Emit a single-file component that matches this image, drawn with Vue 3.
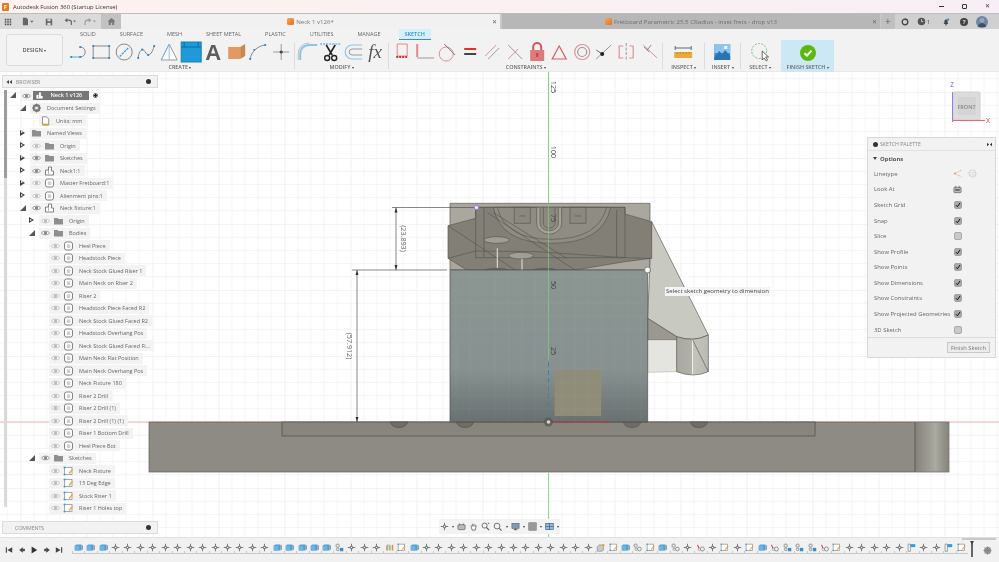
<template>
  <div class="app">
    <svg class="defs" width="0" height="0" aria-hidden="true">
      <defs>
        <symbol id="i-eye" viewBox="0 0 10 10"><path d="M.8 5C2.5 2.6 7.5 2.6 9.2 5 7.5 7.4 2.5 7.4.8 5Z" fill="#fff" stroke="currentColor" stroke-width=".8" /><circle cx="5" cy="5" r="1.7" fill="currentColor" /></symbol>
        <symbol id="i-folder" viewBox="0 0 10 10"><path d="M.5 2H4l1 1h4.5v5.5H.5Z" fill="#8f8f8f" /></symbol>
        <symbol id="i-comp" viewBox="0 0 10 10"><path d="M1 4h3V1h3v4h2v4H1Z" fill="#fff" stroke="#666" stroke-width=".8" stroke-linejoin="round" /><path d="M4 4v4" stroke="#888" stroke-width=".6" /></symbol>
        <symbol id="i-body" viewBox="0 0 10 10"><rect x="1" y="1" width="8" height="8" rx="2" fill="#fff" stroke="#666" stroke-width=".8" /><rect x="3.4" y="3.4" width="3.4" height="3.6" fill="#cfcfcf" /></symbol>
        <symbol id="i-sketch" viewBox="0 0 10 10"><rect x="1" y="1.5" width="7.5" height="7" fill="#fff" stroke="#7a8a96" stroke-width=".7" /><circle cx="1" cy="1.5" r="1" fill="#3c9ad6" /><circle cx="1" cy="8.5" r="1" fill="#3c9ad6" /><path d="M5.5 7.5 9 3.5" stroke="#f0a030" stroke-width="1.2" /></symbol>
        <symbol id="i-gear" viewBox="0 0 10 10"><circle cx="5" cy="5" r="3" fill="none" stroke="#777" stroke-width="1.8" /><path d="M5 .5v9M.5 5h9M1.8 1.8l6.4 6.4M8.2 1.8 1.8 8.2" stroke="#777" stroke-width="1" /><circle cx="5" cy="5" r="1.3" fill="#f2f2f2" /></symbol>
        <symbol id="i-doc" viewBox="0 0 10 10"><path d="M2 .8h4l2.2 2.2v6H2Z" fill="#fff" stroke="#666" stroke-width=".7" /><path d="M1.6 7.6h7v1.7h-7Z" fill="#e0a030" /></symbol>

        <symbol id="t-line" viewBox="0 0 22 22"><path d="M12 6a5 5 0 0 1 0 10" fill="none" stroke="#888" stroke-width="1" /><path d="M3 16h9" stroke="#5aa6da" stroke-width="1" /><circle cx="3" cy="16" r="1.1" fill="#1f86cc" /><circle cx="12" cy="16" r="1.1" fill="#1f86cc" /><circle cx="12" cy="6" r="1.1" fill="#1f86cc" /></symbol>
        <symbol id="t-rect" viewBox="0 0 22 22"><rect x="3" y="5" width="16" height="12" fill="none" stroke="#888" /><path d="M3 5h.1M19 5h.1M3 17h.1M19 17h.1" stroke="#1f86cc" stroke-width="2" stroke-linecap="round" /></symbol>
        <symbol id="t-circle" viewBox="0 0 22 22"><circle cx="11" cy="11" r="8" fill="none" stroke="#888" /><path d="M6.5 15.5 15.5 6.5" stroke="#3b9bd8" stroke-width="1.2" stroke-dasharray="2.4 .8" /></symbol>
        <symbol id="t-spline" viewBox="0 0 22 22"><path d="M3 17C4 8 8 7 10 11s6 5 9-6" fill="none" stroke="#888" /><g fill="#1f86cc"><circle cx="3" cy="17" r="1.1" /><circle cx="7" cy="8.5" r="1.1" /><circle cx="13" cy="14" r="1.1" /><circle cx="19" cy="5" r="1.1" /></g></symbol>
        <symbol id="t-tri" viewBox="0 0 22 22"><path d="M11 3 3 19h16Z" fill="#fff" stroke="#999" /><path d="M11 3v16M3 19 11 3" stroke="#7ab8e2" stroke-width=".9" fill="none" /></symbol>
        <symbol id="t-project" viewBox="0 0 22 22"><rect width="20" height="20" x="1" y="1" fill="#1f9ad6" stroke="#1480bc" /><path d="M1 6h20M4 1v5M18 1v5" stroke="#0c6fa6" /></symbol>
        <symbol id="t-text" viewBox="0 0 22 22"><text x="11" y="19" text-anchor="middle" font-family="Liberation Sans, sans-serif" font-weight="700" font-size="22" fill="#5c5c5c">A</text></symbol>
        <symbol id="t-box" viewBox="0 0 22 22"><path d="M3 6h12v12H3Z" fill="#e39a62" /><path d="M15 6l5-3v12l-5 3Z" fill="#c98850" /></symbol>
        <symbol id="t-arc" viewBox="0 0 22 22"><path d="M3 18C4 11 10 5 18 4" fill="none" stroke="#888" /><g fill="#1f86cc"><circle cx="3" cy="18" r="1.1" /><circle cx="18" cy="4" r="1.1" /><circle cx="7" cy="9" r="1" /></g></symbol>
        <symbol id="t-point" viewBox="0 0 22 22"><path d="M11 3v16M3 11h16" stroke="#999" /><circle cx="11" cy="11" r="1.6" fill="#444" /></symbol>
        <symbol id="t-fillet" viewBox="0 0 22 22"><path d="M3 19v-6Q3 5 12 4h8" fill="none" stroke="#8cc4ea" stroke-width="2" /><path d="M1 19v-6Q1 3 12 2" fill="none" stroke="#aaa" stroke-width=".7" /></symbol>
        <symbol id="t-trim" viewBox="0 0 22 22"><path d="M1 3h20" stroke="#3b9bd8" stroke-dasharray="2 1" /><path d="M7 4l6 10M16 4l-6 10" stroke="#222" stroke-width="1.6" /><circle cx="8" cy="17" r="2.5" fill="none" stroke="#222" stroke-width="1.4" /><circle cx="15" cy="17" r="2.5" fill="none" stroke="#222" stroke-width="1.4" /></symbol>
        <symbol id="t-offset" viewBox="0 0 22 22"><path d="M20 4H10a7 7 0 0 0 0 14h10" fill="none" stroke="#8cc4ea" stroke-width="1.2" /><path d="M20 8H10a3 3 0 0 0 0 6h10" fill="none" stroke="#999" stroke-width="1" /></symbol>
        <symbol id="t-fx" viewBox="0 0 22 22"><text x="11" y="17" text-anchor="middle" font-family="Liberation Serif, serif" font-style="italic" font-size="19" fill="#555">fx</text></symbol>
        <symbol id="t-dim" viewBox="0 0 22 22"><path d="M6 3h10v12H6Z" fill="none" stroke="#e08a8a" /><path d="M5 16h12" stroke="#c33" stroke-width="2" stroke-dasharray="2 1" /></symbol>
        <symbol id="t-coll" viewBox="0 0 22 22"><path d="M3 3v13" stroke="#e08a8a" stroke-width="2" /><path d="M3 17h17" stroke="#999" /></symbol>
        <symbol id="t-tan" viewBox="0 0 22 22"><circle cx="10" cy="13" r="7" fill="none" stroke="#e09090" /><path d="M8 3l11 11" stroke="#777" /></symbol>
        <symbol id="t-equal" viewBox="0 0 22 22"><path d="M5 8h12" stroke="#d33" stroke-width="2.2" /><path d="M5 13h12" stroke="#444" stroke-width="2.2" /></symbol>
        <symbol id="t-para" viewBox="0 0 22 22"><path d="M4 15 15 4" stroke="#e09090" /><path d="M7 18 18 7" stroke="#999" /></symbol>
        <symbol id="t-perp" viewBox="0 0 22 22"><path d="M5 4 19 18" stroke="#999" /><path d="M5 18 15 8" stroke="#e09090" /></symbol>
        <symbol id="t-lock" viewBox="0 0 22 22"><path d="M7 10V6a4 4 0 0 1 8 0v4" fill="none" stroke="#d05a5a" stroke-width="2" /><rect x="4" y="9" width="14" height="11" fill="#e07a7a" /><rect x="10" y="12" width="2" height="4" fill="#b44" /></symbol>
        <symbol id="t-triangle" viewBox="0 0 22 22"><path d="M11 5 4 18h14Z" fill="none" stroke="#d86060" stroke-width="1.2" /></symbol>
        <symbol id="t-conc" viewBox="0 0 22 22"><circle cx="11" cy="11" r="7.5" fill="none" stroke="#e09090" stroke-width="1.2" /><circle cx="11" cy="11" r="4.5" fill="none" stroke="#999" stroke-width="1.2" /></symbol>
        <symbol id="t-mid" viewBox="0 0 22 22"><path d="M3 18 18 4" stroke="#999" /><path d="M3 9l6 4" stroke="#666" /><circle cx="9" cy="13" r="2" fill="#222" /></symbol>
        <symbol id="t-sym" viewBox="0 0 22 22"><path d="M11 2v18" stroke="#999" stroke-dasharray="3 1.5" /><path d="M8 5H4v12h4M14 5h4v12h-4" fill="none" stroke="#e09090" stroke-width="1.2" /></symbol>
        <symbol id="t-fix" viewBox="0 0 22 22"><path d="M5 4 19 17" stroke="#e09090" /><path d="M13 4 9 9M6 6l5 5" stroke="#888" /></symbol>
        <symbol id="t-ruler" viewBox="0 0 22 22"><path d="M3 7h16M3 5v4M19 5v4" stroke="#666" fill="none" /><rect x="2" y="11" width="18" height="6" fill="#eba93a" /><path d="M5 11v2M8 11v2M11 11v2M14 11v2M17 11v2" stroke="#a87418" stroke-width=".7" /></symbol>
        <symbol id="t-image" viewBox="0 0 22 22"><rect x="3" y="3" width="16" height="16" fill="#3d8fd1" /><rect x="3" y="3" width="16" height="9" fill="#8cc6ee" /><path d="M3 17l5-7 3 3 3-4 5 6v4H3Z" fill="#2b74b3" /><rect x="13" y="5" width="3" height="3" fill="#fff" /></symbol>
        <symbol id="t-select" viewBox="0 0 22 22"><circle cx="10" cy="10" r="7.5" fill="none" stroke="#6fbf86" stroke-dasharray="2 1.4" /><path d="M13 10v9l2-2 2 3 1.4-1-2-3h3Z" fill="#fff" stroke="#444" stroke-width=".8" /></symbol>

        <symbol id="n-plus" viewBox="0 0 12 12"><path d="M6 1v10M1 6h10" stroke="#555" /><path d="M4.5 4.5h3v3h-3Z" fill="#f0f0f0" stroke="#444" stroke-width=".8" /></symbol>
        <symbol id="n-box" viewBox="0 0 12 12"><path d="M1 3.5 3 2h7v8H1Z" fill="#4d9fd8" /><path d="M1 3.5h6V10H1Z" fill="#6db4e6" /><path d="M11 3v6" stroke="#555" /></symbol>
        <symbol id="n-joint" viewBox="0 0 12 12"><rect x="1.5" y="1.5" width="4" height="4" rx="1" fill="none" stroke="#777" /><circle cx="3.5" cy="8.5" r="1.7" fill="none" stroke="#777" /><rect x="6.5" y="6.5" width="4.5" height="4.5" fill="#2f8fd4" /></symbol>
        <symbol id="n-jointo" viewBox="0 0 12 12"><rect x="1.5" y="1.5" width="4" height="4" rx="1" fill="none" stroke="#777" /><circle cx="8.5" cy="8" r="2.5" fill="none" stroke="#777" /><circle cx="4" cy="8.5" r="1.5" fill="none" stroke="#999" /></symbol>
        <symbol id="n-red" viewBox="0 0 12 12"><path d="M2 2.5 4 7" stroke="#d33" stroke-width="1.4" /><circle cx="8.5" cy="8" r="2.7" fill="none" stroke="#777" /><circle cx="4.5" cy="8.5" r="1.6" fill="none" stroke="#999" /></symbol>
        <symbol id="n-sketch" viewBox="0 0 12 12"><rect x="1.5" y="1.5" width="8.5" height="8.5" fill="#fff" stroke="#888" stroke-width=".9" /><circle cx="1.5" cy="1.5" r="1" fill="#3c9ad6" /><circle cx="1.5" cy="10" r="1" fill="#3c9ad6" /><path d="M6.5 9 11 4" stroke="#f0a030" stroke-width="1.4" /></symbol>
        <symbol id="n-bars" viewBox="0 0 12 12"><path d="M2 10V4l2-2v8" fill="#e7c07a" stroke="#777" stroke-width=".6" /><path d="M5.5 10V3l2-1v8" fill="#7cc27a" /><path d="M9 10V3l2-1v8" fill="#e08a4a" /></symbol>
        <symbol id="n-comp" viewBox="0 0 12 12"><path d="M1.5 5 4 2.5h6v7L8 11H1.5Z" fill="#c8c8c8" stroke="#888" stroke-width=".8" /><circle cx="9.5" cy="3" r="1.8" fill="#f2a43a" /></symbol>
        <symbol id="n-plate" viewBox="0 0 12 12"><path d="M1.5 1.5h3V11h-3Z" fill="#fff" stroke="#666" stroke-width=".8" /><path d="M4.5 1.5H11v4H4.5Z" fill="#3a9ad9" /></symbol>
        <symbol id="c-on" viewBox="0 0 8 8"><rect x=".5" y=".5" width="7" height="7" rx="1.4" fill="#a9a9a9" stroke="#777" stroke-width=".5" /><path d="M2 4.2 3.4 5.8 6 2" fill="none" stroke="#111" stroke-width="1" /></symbol>
        <symbol id="c-off" viewBox="0 0 8 8"><rect x=".5" y=".5" width="7" height="7" rx="1.4" fill="#c9c9c9" stroke="#777" stroke-width=".5" /></symbol>
      </defs>
    </svg>

    <header class="titlebar">
      <span class="titlebar__logo">F</span>
      <span class="titlebar__text">Autodesk Fusion 360 (Startup License)</span>
      <div class="titlebar__controls">
        <span class="winbtn winbtn--min"></span>
        <span class="winbtn winbtn--max"></span>
        <span class="winbtn winbtn--close">✕</span>
      </div>
    </header>

    <div class="tabbar">
      <div class="quick">
        <svg class="quick__icon" viewBox="0 0 10 10"><path d="M1 1h2v2H1ZM4 1h2v2H4ZM7 1h2v2H7ZM1 4h2v2H1ZM4 4h2v2H4ZM7 4h2v2H7ZM1 7h2v2H1ZM4 7h2v2H4ZM7 7h2v2H7Z" fill="#555" /></svg>
        <svg class="quick__icon quick__icon--file" viewBox="0 0 14 10"><path d="M1 .5h4l2 2v7H1Z" fill="#666" /><path d="M9.5 4h4L11.5 6.5Z" fill="#666" /></svg>
        <svg class="quick__icon quick__icon--save" viewBox="0 0 10 10"><path d="M1 1h7l1 1v7H1Z" fill="#666" /><rect x="3" y="1.5" width="4" height="2.5" fill="#ddd" /><rect x="3" y="6" width="4" height="3" fill="#ddd" /></svg>
        <svg class="quick__icon quick__icon--undo" viewBox="0 0 14 10"><path d="M1 3.5 4 1v5Z" fill="#666" /><path d="M3.5 3.5H6A2.5 2.5 0 0 1 8.5 6v3" fill="none" stroke="#666" stroke-width="1.3" /><path d="M10.5 4h3L12 6Z" fill="#666" /></svg>
        <svg class="quick__icon quick__icon--redo" viewBox="0 0 14 10"><path d="M8.5 3.5 5.5 1v5Z" fill="#999" /><path d="M6 3.5H4A2.5 2.5 0 0 0 1.5 6v3" fill="none" stroke="#999" stroke-width="1.3" /><path d="M10.5 4h3L12 6Z" fill="#999" /></svg>
        <span class="quick__home">
          <svg viewBox="0 0 10 10" width="9" height="9"><path d="M5 1 .5 5H2v4h2.2V6.5h1.6V9H8V5h1.5Z" fill="#777" /></svg>
        </span>
      </div>
      <div class="doctab doctab--active">
        <span class="doctab__cube"></span>
        <span class="doctab__name">Neck 1 v126*</span>
        <span class="doctab__close">✕</span>
      </div>
      <div class="doctab doctab--other">
        <span class="doctab__cube"></span>
        <span class="doctab__name">Fretboard Parametric 25.5 CRadius - inset frets - drop v13</span>
        <span class="doctab__close">✕</span>
      </div>
      <span class="tabbar__plus">+</span>
      <div class="tabbar__right">
        <svg class="status status--job" viewBox="0 0 10 10"><circle cx="5" cy="5" r="3.5" fill="none" stroke="#444" stroke-width="1.6" /><path d="M5 0 7 2 5 3Z" fill="#444" /></svg>
        <span class="status-count">
          <svg viewBox="0 0 10 10" width="9" height="9"><circle cx="5" cy="5" r="4.2" fill="#555" /><path d="M5 2.5V5h2" stroke="#ccc" fill="none" /></svg>
          <span>1</span>
        </span>
        <svg class="status status--bell" viewBox="0 0 10 10"><path d="M5 2C3 2 3 4 3 6L2 7.5h6L7 6C7 4 7 2 5 2Z" fill="#444" /><circle cx="5" cy="8.5" r="1" fill="#444" /><circle cx="7.5" cy="2" r="1.5" fill="#2a8fd8" /></svg>
        <span class="status status--help">?</span>
        <svg class="status status--avatar" viewBox="0 0 12 12"><circle cx="6" cy="6" r="6" fill="#6f86a6" /><circle cx="6" cy="4.5" r="2.4" fill="#98a6b8" /><path d="M1.8 11c.6-3 2.4-4 4.2-4s3.6 1 4.2 4Z" fill="#3f4f66" /></svg>
      </div>
    </div>

    <div class="toolbar">
      <button class="design">DESIGN <i class="caret"></i></button>
      <div class="ribbon">
        <nav class="ribbon__tabs">
          <span v-for="tab in tabs" :key="tab" class="ribbon__tab" :class="{ 'ribbon__tab--active': tab === 'SKETCH' }">{{ tab }}</span>
        </nav>
        <div class="ribbon__groups">
          <section v-for="group in groups" :key="group.label" class="group" :class="`group--${group.kind}`">
            <div class="group__icons">
              <svg v-for="icon in group.icons" :key="icon" class="tool"><use :href="`#t-${icon}`" /></svg>
              <span v-if="group.kind === 'finish'" class="finish-check">
                <svg viewBox="0 0 16 16" width="16" height="16"><circle cx="8" cy="8" r="8" fill="#5cb811" /><path d="M4.5 8.2 7 10.6l4.5-5" fill="none" stroke="#fff" stroke-width="2" /></svg>
              </span>
            </div>
            <span class="group__label">{{ group.label }} <i class="caret"></i></span>
          </section>
        </div>
      </div>
    </div>

    <main class="workspace">
      <svg class="canvas" viewBox="0 72 999 465">
        <defs>
          <pattern id="grid" patternUnits="userSpaceOnUse" x="548.5" y="422" width="66" height="66">
            <path d="M13.2 0v66M26.4 0v66M39.6 0v66M52.8 0v66M0 13.2h66M0 26.4h66M0 39.6h66M0 52.8h66" stroke="#f4f4f4" stroke-width="1" fill="none" />
            <path d="M0 0v66M0 0h66" stroke="#e8e8e8" stroke-width="1.2" fill="none" />
          </pattern>
          <linearGradient id="block" x1="0" y1="0" x2="0" y2="1">
            <stop offset="0" stop-color="#8b9592" />
            <stop offset=".65" stop-color="#87918f" />
            <stop offset="1" stop-color="#687170" />
          </linearGradient>
          <linearGradient id="cyl" x1="0" y1="0" x2="1" y2="0">
            <stop offset="0" stop-color="#84827a" />
            <stop offset=".6" stop-color="#aaaaa1" />
            <stop offset="1" stop-color="#84827a" />
          </linearGradient>
          <linearGradient id="post" x1="0" y1="0" x2="1" y2="0">
            <stop offset="0" stop-color="#a9a89f" />
            <stop offset=".47" stop-color="#b2b1a8" />
            <stop offset=".5" stop-color="#eee" />
            <stop offset=".53" stop-color="#c4c3bb" />
            <stop offset="1" stop-color="#bcbbb3" />
          </linearGradient>
        </defs>
        <rect x="0" y="72" width="999" height="465" fill="#fff" />
        <rect x="0" y="72" width="999" height="465" fill="url(#grid)" />

        <path d="M0 422H999" stroke="#f4b5b5" stroke-width="1" />
        <path d="M548.5 72V537" stroke="#8fdc8f" stroke-width="1" />

        <!-- base plate -->
        <rect x="149" y="422" width="800" height="50" fill="#8d8b83" stroke="#5f5d56" stroke-width=".7" />
        <rect x="915" y="422.5" width="34" height="49" fill="url(#cyl)" />
        <path d="M915 422V472" stroke="#4e4c46" stroke-width=".7" />
        <rect x="282" y="422" width="533" height="14" fill="#88867c" stroke="#4e4c46" stroke-width=".7" />
        <path v-for="x in holes" :key="x" :d="`M${x - 8.5} 422a8.5 5.5 0 0 0 17 0Z`" fill="#6f6d66" stroke="#4e4c46" stroke-width=".6" />
        <path d="M548.5 472V537" stroke="#8fdc8f" stroke-width="1" />

        <!-- fixture, drawn in 3x coordinates -->
        <g transform="translate(380 190) scale(.33333)" stroke="#5a5850" stroke-width="2" stroke-linejoin="round">
          <rect x="210" y="40" width="600" height="200" fill="#a9a79e" />
          <path d="M803 385 815 95 985 435 Q940 458 890 440Z" fill="#c8c9c1" />
          <path d="M803 385 890 440V450H803Z" fill="#9a988f" />
          <path d="M803 450H890V545L803 547Z" fill="#e5e5e0" stroke="#a8a8a2" stroke-width="1.5" />
          <path d="M890 440Q940 458 985 435V545Q940 565 890 545Z" fill="url(#post)" />
          <path d="M938 450 985 545" fill="none" />
          <path d="M204 107 287 85V52H735V72L815 95V205L735 215 585 240H260L204 205Z" fill="#817f76" />
          <path d="M340 52Q360 160 515 160 670 160 692 52Z" fill="#8e8c83" />
          <path d="M352 52Q375 148 515 148 655 148 680 52" fill="none" />
          <rect x="403" y="52" width="48" height="48" fill="#8a887f" />
          <rect x="570" y="52" width="48" height="48" fill="#8a887f" />
          <path d="M418 78h18M585 78h18" />
          <path d="M470 52V100a37 32 0 0 0 75 0V52" fill="#a3a198" />
          <path d="M480 52V100a27 22 0 0 0 55 0V52" fill="#8e8c83" />
          <path d="M490 52V100a17 14 0 0 0 35 0V52" fill="#8a887f" />
          <rect x="287" y="52" width="448" height="151" fill="none" />
          <path d="M312 52V203M710 60V203" fill="none" />
          <path d="M204 107 405 240M322 68 585 240M340 68 560 205" fill="none" />
          <path d="M204 205 287 183 470 185 735 203 815 205" fill="none" />
          <ellipse cx="350" cy="150" rx="38" ry="10" fill="#a09e95" />
          <ellipse cx="423" cy="197" rx="37" ry="10" fill="#a09e95" />
          <path d="M352 175V240M426 207V240" stroke="#d8d8d2" stroke-width="3.5" />
          <ellipse cx="350" cy="240" rx="32" ry="5" fill="#6c6a62" />
          <ellipse cx="495" cy="240" rx="32" ry="5" fill="#6c6a62" />
          <rect x="210" y="240" width="593" height="456" fill="url(#block)" stroke="#4a4c4a" />
          <rect x="524" y="540" width="139" height="138" fill="#8f8c78" stroke="none" />
        </g>
        <rect x="450.5" y="270.5" width="197" height="151" fill="url(#grid)" opacity=".035" />

        <path d="M548.5 72V360" stroke="#7fd07f" stroke-width=".8" opacity=".85" />
        <path d="M548.5 362V422" stroke="#3f7fb5" stroke-width="1" stroke-dasharray="5 3" />
        <path d="M548.5 422H610" stroke="#c23b3b" stroke-width="1" />
        <circle cx="548.5" cy="422" r="4.5" fill="#5a5a55" opacity=".8" />
        <circle cx="548.5" cy="422" r="1.8" fill="#d8d8d0" />

        <!-- dimensions -->
        <g stroke="#555" stroke-width=".7" fill="none">
          <path d="M392 207.5H476M352 270H447" />
          <path d="M396 207.5V270M357 270V422" />
        </g>
        <path d="M396 207.5l-1.5 5h3ZM396 270l-1.5-5h3ZM357 270l-1.5 5h3ZM357 422l-1.5-5h3Z" fill="#333" />
        <text class="dim" transform="translate(400.5 238.5) rotate(90)" text-anchor="middle">(23.893)</text>
        <text class="dim" transform="translate(347 346) rotate(90)" text-anchor="middle">(57.912)</text>
        <text class="ruler" transform="translate(551 87) rotate(90)" text-anchor="middle">125</text>
        <text class="ruler" transform="translate(551 152) rotate(90)" text-anchor="middle">100</text>
        <text class="ruler" transform="translate(551 218) rotate(90)" text-anchor="middle">75</text>
        <text class="ruler" transform="translate(551 285) rotate(90)" text-anchor="middle">50</text>
        <text class="ruler" transform="translate(551 351) rotate(90)" text-anchor="middle">25</text>

        <circle cx="476.5" cy="207.5" r="2.2" fill="#efe6fa" stroke="#9d6ee0" stroke-width="1" />
        <circle cx="647.5" cy="270" r="3" fill="#fff" stroke="#888" stroke-width="1.2" />

        <!-- view cube -->
        <rect x="953" y="92" width="27" height="28" rx="1" fill="#dcdcdc" stroke="#cfcfcf" />
        <rect x="958" y="97" width="18" height="18" fill="#d4d4d4" />
        <path d="M952.5 122V92" stroke="#8a80e8" stroke-width="1" />
        <path d="M952 120.5H985" stroke="#e86a6a" stroke-width="1" />
        <text class="cube" x="966.5" y="108.5" text-anchor="middle">FRONT</text>
        <text class="axis axis--z" x="952" y="87" text-anchor="middle">Z</text>
        <text class="axis axis--x" x="988" y="123" text-anchor="middle">X</text>
      </svg>

      <aside class="panel browser">
        <svg class="panel__arrows" viewBox="0 0 6 6"><path d="M3 1 .5 3 3 5ZM6 1 3.5 3 6 5Z" fill="#444" /></svg>
        <span class="panel__title">BROWSER</span>
        <span class="panel__pin"></span>
      </aside>

      <div class="tree">
        <span class="tree__scroll"></span>
        <div v-for="(row, i) in rows" :key="i" class="row" :class="`row--l${row.level}`">
          <span class="row__arrow" :class="row.arrow && `row__arrow--${row.arrow}`"></span>
          <div class="row__pill" :class="{ 'row__pill--root': row.root }">
            <svg v-if="row.eye" class="row__icon" :class="`row__icon--${row.eye}`"><use href="#i-eye" /></svg>
            <svg class="row__icon row__icon--main"><use :href="`#i-${row.icon}`" /></svg>
            <span class="row__label">{{ row.label }}</span>
          </div>
          <span v-if="row.root" class="row__radio"></span>
        </div>
      </div>

      <aside class="panel comments">
        <span class="panel__title">COMMENTS</span>
        <span class="panel__pin"></span>
      </aside>

      <section class="palette">
        <div class="palette__head">
          <span class="panel__pin"></span>
          <span class="palette__title">SKETCH PALETTE</span>
          <svg class="palette__arrows" viewBox="0 0 6 6"><path d="M0 1 2.5 3 0 5ZM6 1 3.5 3 6 5Z" fill="#333" /></svg>
        </div>
        <div class="palette__options"><i class="caret caret--big"></i> Options</div>
        <div class="palette__row">
          <span>Linetype</span>
          <svg class="palette__glyph" viewBox="0 0 10 10"><path d="M9 1.5 2 5l7 3.5" fill="none" stroke="#e49a70" stroke-width=".8" stroke-dasharray="1.5 .7" /><circle cx="2" cy="5" r="1" fill="#e49a70" /></svg>
          <svg class="palette__glyph palette__glyph--second" viewBox="0 0 10 10"><ellipse cx="5" cy="5" rx="4" ry="4" fill="none" stroke="#ccc" stroke-width=".8" /><path d="M1 4h8M1 6.5h8" stroke="#ccc" stroke-width=".6" /></svg>
        </div>
        <div class="palette__row">
          <span>Look At</span>
          <svg class="palette__glyph" viewBox="0 0 10 10"><rect x="1" y="2.5" width="8" height="6" rx="1" fill="#bbb" stroke="#555" stroke-width=".7" /><path d="M3 1v2M7 1v2" stroke="#555" stroke-width=".7" /><rect x="2.5" y="4.5" width="5" height="2" fill="#666" /></svg>
        </div>
        <div v-for="opt in options" :key="opt.label" class="palette__row">
          <span>{{ opt.label }}</span>
          <svg class="palette__check"><use :href="opt.on ? '#c-on' : '#c-off'" /></svg>
        </div>
        <div class="palette__foot"><button class="palette__finish">Finish Sketch</button></div>
      </section>

      <div class="tooltip">Select sketch geometry to dimension</div>

      <div class="navbar">
        <svg class="navbar__icon"><use href="#n-plus" /></svg><i class="caret"></i>
        <svg class="navbar__icon" viewBox="0 0 10 10"><rect x="1" y="3" width="8" height="5.5" rx="1" fill="#bbb" stroke="#555" stroke-width=".7" /><path d="M3 1.5v2M7 1.5v2" stroke="#555" stroke-width=".7" /></svg>
        <svg class="navbar__icon" viewBox="0 0 10 10"><path d="M2.5 5.5V3.5M4 5V2M5.5 5V2M7 5V3M2.5 5.5 3.5 9h3.5L8 4" fill="#fff" stroke="#555" stroke-width=".8" /></svg>
        <svg class="navbar__icon" viewBox="0 0 10 10"><circle cx="4" cy="4" r="2.8" fill="none" stroke="#555" stroke-width=".9" /><path d="M6 6l3 3" stroke="#555" stroke-width="1.2" /><path d="M7.5 1.5h2M8.5.5v2" stroke="#555" stroke-width=".5" /></svg>
        <svg class="navbar__icon" viewBox="0 0 10 10"><circle cx="4.5" cy="4.5" r="3.2" fill="none" stroke="#555" stroke-width=".9" /><path d="M7 7l2.5 2.5" stroke="#555" stroke-width="1.2" /></svg><i class="caret"></i>
        <svg class="navbar__icon" viewBox="0 0 10 10"><rect x="1" y="1.5" width="8" height="5.5" fill="#7f9cb8" stroke="#555" stroke-width=".6" /><path d="M3 8.5h4M5 7v1.5" stroke="#555" /></svg><i class="caret"></i>
        <svg class="navbar__icon" viewBox="0 0 10 10"><rect x=".5" y=".5" width="9" height="9" rx="1" fill="#9a9a9a" stroke="#777" stroke-width=".5" /></svg><i class="caret"></i>
        <svg class="navbar__icon" viewBox="0 0 10 10"><rect x=".8" y="1.5" width="8.4" height="7" fill="#9db8d4" stroke="#2b5c8c" stroke-width=".7" /><path d="M.8 5h8.4M5 1.5v7" stroke="#2b5c8c" stroke-width=".7" /></svg><i class="caret"></i>
      </div>
    </main>

    <footer class="timeline">
      <div class="timeline__controls">
        <svg class="ctl" viewBox="0 0 10 10"><path d="M1 1.5h1.400v7H1ZM9 1.5v7L3 5Z" fill="#444" /></svg>
        <svg class="ctl" viewBox="0 0 10 10"><path d="M6 1.5v7L1.5 5Z" fill="#444" /><rect x="6" y="3.5" width="2.5" height="3" fill="#444" /></svg>
        <svg class="ctl" viewBox="0 0 10 10"><path d="M2 .5v9L9 5Z" fill="#333" /></svg>
        <svg class="ctl" viewBox="0 0 10 10"><path d="M4 1.5v7L8.5 5Z" fill="#444" /><rect x="1.5" y="3.5" width="2.5" height="3" fill="#444" /></svg>
        <svg class="ctl" viewBox="0 0 10 10"><path d="M9 1.5H7.6v7H9ZM1 1.5v7L7 5Z" fill="#444" /></svg>
      </div>
      <div class="timeline__track">
        <div class="timeline__items">
          <span v-for="(item, i) in steps" :key="i" class="step">
            <svg class="step__icon"><use :href="`#n-${item}`" /></svg>
          </span>
        </div>
        <span class="timeline__marker"></span>
      </div>
      <svg class="timeline__gear" viewBox="0 0 10 10"><circle cx="5" cy="5" r="3" fill="none" stroke="#888" stroke-width="1.8" /><path d="M5 .5v9M.5 5h9M1.8 1.8l6.4 6.4M8.2 1.8 1.8 8.2" stroke="#888" stroke-width="1.1" /></svg>
      <span class="timeline__thumb"></span>
    </footer>
  </div>
</template>

<script setup>
const tabs = ['SOLID', 'SURFACE', 'MESH', 'SHEET METAL', 'PLASTIC', 'UTILITIES', 'MANAGE', 'SKETCH'];

const groups = [
  { label: 'CREATE', kind: 'tools', icons: ['line', 'rect', 'circle', 'spline', 'tri', 'project', 'text', 'box', 'arc', 'point'] },
  { label: 'MODIFY', kind: 'tools', icons: ['fillet', 'trim', 'offset', 'fx'] },
  { label: 'CONSTRAINTS', kind: 'tools', icons: ['dim', 'coll', 'tan', 'equal', 'para', 'perp', 'lock', 'triangle', 'conc', 'mid', 'sym', 'fix'] },
  { label: 'INSPECT', kind: 'inspect', icons: ['ruler'] },
  { label: 'INSERT', kind: 'insert', icons: ['image'] },
  { label: 'SELECT', kind: 'select', icons: ['select'] },
  { label: 'FINISH SKETCH', kind: 'finish', icons: [] },
];

const bodies = [
  'Heel Piece', 'Headstock Piece', 'Neck Stock Glued Riser 1', 'Main Neck on Riser 2', 'Riser 2',
  'Headstock Piece Faced R2', 'Neck Stock Glued Faced R2', 'Headstock Overhang Pos', 'Neck Stock Glued Faced Fi...',
  'Main Neck Flat Position', 'Main Neck Overhang Pos', 'Neck Fixture 180', 'Riser 2 Drill', 'Riser 2 Drill (1)',
  'Riser 2 Drill (1) (1)', 'Riser 1 Bottom Drill', 'Heel Piece Bot',
];
const sketches = ['Neck Fixture', '15 Deg Edge', 'Stock Riser 1', 'Riser 1 Holes top'];

const rows = [
  { level: 0, arrow: 'open', eye: 'on', icon: 'comp', label: 'Neck 1 v126', root: true },
  { level: 1, arrow: 'open', icon: 'gear', label: 'Document Settings' },
  { level: 2, icon: 'doc', label: 'Units: mm' },
  { level: 1, arrow: 'closed', icon: 'folder', label: 'Named Views' },
  { level: 1, arrow: 'closed', eye: 'off', icon: 'folder', label: 'Origin' },
  { level: 1, arrow: 'closed', eye: 'on', icon: 'folder', label: 'Sketches' },
  { level: 1, arrow: 'closed', eye: 'on', icon: 'comp', label: 'Neck1:1' },
  { level: 1, arrow: 'closed', eye: 'off', icon: 'body', label: 'Master Fretboard:1' },
  { level: 1, arrow: 'closed', eye: 'off', icon: 'body', label: 'Alienment pins:1' },
  { level: 1, arrow: 'open', eye: 'on', icon: 'comp', label: 'Neck fixture:1' },
  { level: 2, arrow: 'closed', eye: 'off', icon: 'folder', label: 'Origin' },
  { level: 2, arrow: 'open', eye: 'on', icon: 'folder', label: 'Bodies' },
  ...bodies.map((label) => ({ level: 3, eye: 'off', icon: 'body', label })),
  { level: 2, arrow: 'open', eye: 'on', icon: 'folder', label: 'Sketches' },
  ...sketches.map((label) => ({ level: 3, eye: 'off', icon: 'sketch', label })),
];

const options = [
  { label: 'Sketch Grid', on: true },
  { label: 'Snap', on: true },
  { label: 'Slice', on: false },
  { label: 'Show Profile', on: true },
  { label: 'Show Points', on: true },
  { label: 'Show Dimensions', on: true },
  { label: 'Show Constraints', on: true },
  { label: 'Show Projected Geometries', on: true },
  { label: '3D Sketch', on: false },
];

const holes = [399, 465, 632, 699];

const repeat = (item, n) => Array(n).fill(item);
const steps = [
  ...repeat('box', 3), ...repeat('plus', 13), ...repeat('box', 5), 'joint', ...repeat('plus', 3),
  'bars', 'sketch', 'box', ...repeat('plus', 14),
  'comp', 'sketch', 'box', 'jointo', 'sketch', 'box', 'jointo', 'plus', 'red', 'plus', 'sketch', 'plus',
  'sketch', 'box', 'red', 'joint', 'joint', 'joint', 'red', 'sketch',
  ...repeat('plus', 5), 'plate', 'plus', 'plus', 'plate', 'sketch',
];
</script>

<style>
html, body { margin: 0; background: #fff; overflow: hidden; }
</style>

<style scoped>
.app {
  width: 999px;
  height: 562px;
  display: flex;
  flex-direction: column;
  overflow: hidden;
  font-family: "Open Sans", "Liberation Sans", sans-serif;
  color: #555;
  filter: blur(0.3px);
}
.defs { position: absolute; }
.caret {
  display: inline-block;
  width: 0;
  height: 0;
  border-left: 1.5px solid transparent;
  border-right: 1.5px solid transparent;
  border-top: 2px solid #444;
  vertical-align: middle;
}
.caret--big { border-left-width: 2.5px; border-right-width: 2.5px; border-top-width: 3.5px; margin-right: 3px; }

.titlebar {
  height: 13px;
  display: flex;
  align-items: center;
  background: linear-gradient(90deg, #fdf2ef, #f7eff5);
  flex: none;
}
.titlebar__logo {
  width: 7px;
  height: 8px;
  margin: 0 4px 0 2px;
  border-radius: 1px;
  background: #e8791c;
  color: #fff;
  font-size: 6px;
  font-weight: 700;
  line-height: 8px;
  text-align: center;
}
.titlebar__text { font-size: 5.9px; color: #333; }
.titlebar__controls { margin-left: auto; display: flex; align-items: center; padding-right: 9px; gap: 18px; }
.winbtn { display: block; width: 5px; height: 5px; box-sizing: border-box; color: #333; }
.winbtn--min { height: 1px; background: #333; }
.winbtn--max { border: 1px solid #333; border-radius: 1px; }
.winbtn--close { font-size: 6px; line-height: 5px; }

.tabbar {
  height: 16px;
  display: flex;
  flex: none;
  align-items: stretch;
  background: #c9c9c9;
  border-top: 1px solid #bdbdbd;
  box-sizing: border-box;
}
.quick {
  width: 121px;
  flex: none;
  display: flex;
  align-items: center;
  padding-left: 4px;
  box-sizing: border-box;
  background: #dadada;
}
.quick__icon { width: 8px; height: 8px; flex: none; }
.quick__icon--file { width: 12px; height: 9px; margin-left: 9.5px; }
.quick__icon--save { margin-left: 11.5px; }
.quick__icon--undo { width: 14px; height: 9px; margin-left: 9.5px; }
.quick__icon--redo { width: 14px; height: 9px; margin-left: 6.5px; }
.quick__home {
  margin-left: 4px;
  align-self: stretch;
  flex: 1;
  background: #c2c2c2;
  display: flex;
  align-items: center;
  justify-content: center;
}
.doctab {
  display: flex;
  align-items: center;
  justify-content: center;
  position: relative;
  box-sizing: border-box;
}
.doctab--active { width: 379px; background: #f1f1f1; color: #777; font-size: 6.1px; }
.doctab--other { width: 378px; margin-left: 2px; background: #b7b7b7; color: #6f6f6f; font-size: 6.1px; }
.doctab__cube { width: 7px; height: 7px; margin-right: 2px; border-radius: 1.5px; background: linear-gradient(135deg, #f4a45c, #e2741e); }
.doctab__close { position: absolute; right: 3px; font-size: 5.5px; color: #666; }
.tabbar__plus { width: 14px; text-align: center; font-size: 11px; line-height: 14px; color: #666; background: #c0c0c0; margin-left: 1px; flex: none; }
.tabbar__right { flex: 1; display: flex; align-items: center; position: relative; background: #d0d0d0; padding-left: 6px; }
.status { width: 8px; height: 8px; flex: none; }
.status-count { display: flex; align-items: center; gap: 1px; margin-left: 8px; font-size: 5.5px; color: #444; }
.status--bell { margin-left: 12px; }
.status--help {
  margin-left: 10px;
  border-radius: 50%;
  background: #444;
  color: #ddd;
  font-size: 6px;
  font-weight: 700;
  line-height: 8px;
  text-align: center;
}
.status--avatar { width: 12px; height: 12px; margin-left: 8px; }

.toolbar {
  height: 43px;
  flex: none;
  display: flex;
  background: #f2f2f2;
  border-bottom: 1px solid #e8e8e8;
  box-sizing: border-box;
}
.design {
  width: 57px;
  height: 32px;
  margin: 5px 5px 0 6px;
  flex: none;
  border: 1px solid #dcdcdc;
  border-radius: 3px;
  background: #f4f4f4;
  color: #555;
  font: 600 5.6px "Open Sans", sans-serif;
  padding: 0;
}
.ribbon { display: flex; flex-direction: column; min-width: 0; }
.ribbon__tabs { height: 11px; display: flex; align-items: stretch; }
.ribbon__tab {
  font-size: 5.5px;
  line-height: 10px;
  padding: 0 12px;
  color: #666;
  box-sizing: border-box;
  white-space: nowrap;
}
.ribbon__tab--active {
  color: #2f8fcb;
  background: #d8eef9;
  border-bottom: 1.5px solid #2a93d5;
  font-weight: 600;
  padding: 0 6px;
  margin-left: 6px;
}
.ribbon__groups { display: flex; height: 32px; }
.group { display: flex; flex-direction: column; align-items: center; height: 32px; flex: none; position: relative; }
.group::after {
  content: '';
  position: absolute;
  right: -3px;
  top: 3px;
  height: 26px;
  width: 1px;
  background: #dcdcdc;
}
.group + .group { margin-left: 5px; }
.group__icons { display: flex; height: 23px; align-items: center; }
.tool { width: 22.4px; height: 22px; flex: none; }
.group__label { font-size: 5.4px; font-weight: 600; color: #666; white-space: nowrap; }
.group--inspect { width: 37px; }
.group--insert { width: 31px; }
.group--select { width: 34px; }
.group--select::after { display: none; }
.group--finish {
  width: 53px;
  margin-left: 4px !important;
  background: #cce8f5;
}
.group--finish::after { display: none; }
.finish-check { display: flex; align-items: center; padding-top: 3px; }

.workspace { position: relative; flex: 1; overflow: hidden; min-height: 0; }
.canvas { position: absolute; inset: 0; width: 999px; height: 465px; display: block; }
.dim { font: 7.2px "Open Sans", sans-serif; fill: #666; }
.ruler { font: 7.2px "Open Sans", sans-serif; fill: #444; }
.cube { font: 600 5.5px "Open Sans", sans-serif; fill: #888; }
.axis { font: 600 6.5px "Open Sans", sans-serif; }
.axis--z { fill: #8a80e8; }
.axis--x { fill: #e86a6a; }

.panel {
  position: absolute;
  left: 2px;
  width: 156px;
  height: 13px;
  box-sizing: border-box;
  display: flex;
  align-items: center;
  padding: 0 3px;
  background: #f2f2f2;
  border: 1px solid #dcdcdc;
  font-size: 5.2px;
  color: #888;
}
.browser { top: 3px; }
.comments { bottom: 3px; padding-left: 12px; }
.panel__arrows { width: 6px; height: 6px; margin-right: 4px; }
.panel__pin { width: 5px; height: 5px; border-radius: 50%; background: #333; margin-left: auto; margin-right: 3px; flex: none; }
.tree { position: absolute; left: 0; top: 17.25px; width: 160px; }
.tree__scroll {
  position: absolute;
  left: 4px;
  top: 1px;
  width: 3px;
  height: 417px;
  background: linear-gradient(180deg, #9c9c9c 0 21%, #d9d9d9 21% 100%);
}
.row { height: 12.5px; display: flex; align-items: center; position: relative; box-sizing: border-box; }
.row--l0 { padding-left: 6.5px; }
.row--l1 { padding-left: 16.5px; }
.row--l2 { padding-left: 25.5px; }
.row--l3 { padding-left: 35.5px; }
.row__arrow { width: 13px; height: 100%; flex: none; position: relative; }
.row__arrow--closed::before {
  content: '';
  position: absolute;
  left: 3.5px;
  top: 2.75px;
  width: 0;
  height: 0;
  border-top: 3.5px solid transparent;
  border-bottom: 3.5px solid transparent;
  border-left: 5px solid #444;
}
.row__arrow--closed::after {
  content: '';
  position: absolute;
  left: 4.5px;
  top: 4.5px;
  width: 0;
  height: 0;
  border-top: 1.8px solid transparent;
  border-bottom: 1.8px solid transparent;
  border-left: 2.6px solid #fff;
}
.row__arrow--open::before {
  content: '';
  position: absolute;
  left: 3.5px;
  top: 3px;
  width: 0;
  height: 0;
  border-left: 6px solid transparent;
  border-bottom: 6px solid #555;
}
.row__pill {
  display: flex;
  align-items: center;
  height: 11px;
  background: #f3f3f3;
  padding-right: 4px;
}
.row__pill--root { padding-right: 0; }
.row__pill--root .row__icon--main { background: #777; height: 9px; }
.row__pill--root .row__label {
  background: #777;
  color: #fff;
  font-weight: 600;
  margin-left: 0;
  padding: 0 5px;
  width: 43.5px;
  box-sizing: border-box;
  line-height: 9px;
}
.row__icon { width: 13px; height: 10px; flex: none; color: #888; }
.row__icon--off { color: #bbb; }
.row__label { font-size: 5.5px; color: #666; margin-left: 4.5px; white-space: nowrap; }
.row__radio {
  width: 5px;
  height: 5px;
  margin-left: 3.5px;
  box-sizing: border-box;
  border: 1px solid #555;
  border-radius: 50%;
  background: radial-gradient(#222 0 1px, #fff 1.2px);
}

.palette {
  position: absolute;
  top: 65px;
  right: 3px;
  width: 129px;
  height: 221px;
  box-sizing: border-box;
  background: #f2f2f2;
  border: 1px solid #d8d8d8;
  font-size: 5.9px;
  color: #666;
}
.palette__head {
  height: 13px;
  display: flex;
  align-items: center;
  padding: 0 3px 0 5px;
  border-bottom: 1px solid #e2e2e2;
  box-sizing: border-box;
  color: #888;
  font-size: 5.2px;
}
.palette__head .panel__pin { margin: 0 2px 0 0; }
.palette__arrows { width: 5px; height: 5px; margin-left: auto; }
.palette__options { height: 15px; display: flex; align-items: center; padding-left: 5px; font-weight: 700; color: #555; }
.palette__row {
  height: 15.58px;
  display: flex;
  align-items: center;
  padding-left: 6px;
  position: relative;
}
.palette__check { position: absolute; left: 85.5px; width: 8px; height: 8px; }
.palette__glyph { position: absolute; left: 85px; width: 9px; height: 9px; }
.palette__glyph--second { left: 100px; }
.palette__foot {
  position: absolute;
  left: 0;
  right: 0;
  bottom: 0;
  height: 20px;
  border-top: 1px solid #dcdcdc;
  display: flex;
  align-items: center;
  justify-content: flex-end;
  padding-right: 5px;
  box-sizing: border-box;
}
.palette__finish {
  width: 43px;
  height: 11px;
  padding: 0;
  border: 1px solid #c8c8c8;
  background: #ececec;
  color: #777;
  font: 5.8px "Open Sans", sans-serif;
}

.tooltip {
  position: absolute;
  left: 665px;
  top: 215px;
  height: 9px;
  line-height: 9px;
  padding: 0 1px;
  font-size: 6px;
  color: #444;
  background: #f4f4f4;
  white-space: nowrap;
}

.navbar {
  position: absolute;
  left: 439px;
  bottom: 3px;
  width: 121px;
  height: 15px;
  display: flex;
  align-items: center;
  gap: 3.1px;
  padding-left: 1px;
  box-sizing: border-box;
  background: #f3f3f3;
}
.navbar__icon { width: 9px; height: 9px; flex: none; }

.timeline {
  height: 25px;
  flex: none;
  display: flex;
  position: relative;
  background: #f1f1f1;
  border-top: 1px solid #e0e0e0;
  box-sizing: border-box;
}
.timeline__controls { width: 72px; display: flex; align-items: center; padding: 0 0 0 5px; gap: 4.5px; flex: none; box-sizing: border-box; }
.ctl { width: 8px; height: 8px; flex: none; }
.timeline__track { position: relative; width: 900px; flex: none; }
.timeline__items {
  display: flex;
  padding-top: 5px;
  height: 19px;
  box-sizing: border-box;
  background:
    linear-gradient(#c9c9c9, #c9c9c9) 0 14.5px / 896px 1px no-repeat,
    repeating-linear-gradient(90deg, #c9c9c9 0 1px, transparent 1px 12.45px) 0 12.5px / 896px 2px no-repeat;
}
.step { width: 12.45px; flex: none; display: flex; justify-content: center; }
.step__icon { width: 9px; height: 9px; }
.timeline__marker { position: absolute; left: 899px; top: 4px; width: 2px; height: 15px; background: #666; }
.timeline__marker::before {
  content: '';
  position: absolute;
  left: -1.5px;
  top: -1px;
  border-left: 2.5px solid transparent;
  border-right: 2.5px solid transparent;
  border-top: 4px solid #444;
}
.timeline__gear { width: 9px; height: 9px; align-self: center; margin-left: 11px; flex: none; }
.timeline__thumb { position: absolute; right: 3px; top: 0; width: 34px; height: 2px; background: #c8c8c8; }
</style>
